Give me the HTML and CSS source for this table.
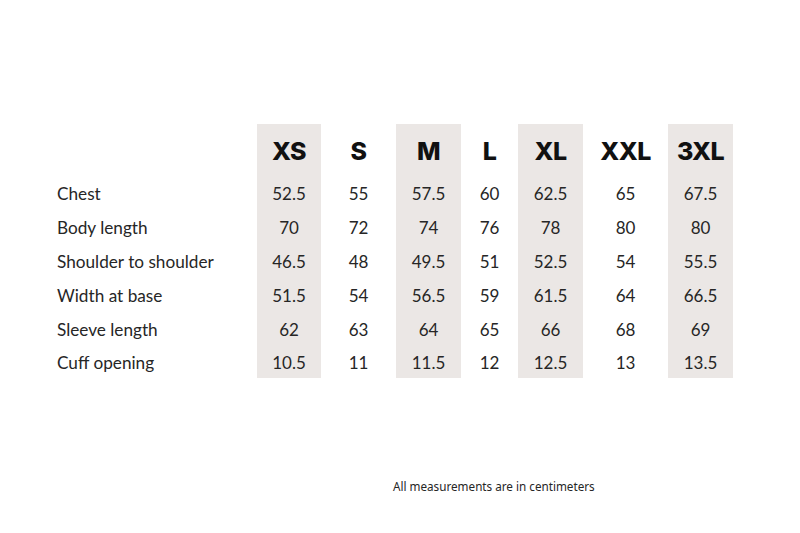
FILE: index.html
```html
<!DOCTYPE html>
<html>
<head>
<meta charset="utf-8">
<link rel="stylesheet" href="styles.css">
</head>
<body>
<div class="page">
  <div class="chart">
    <div class="cell label"></div>
    <div class="cell size shade">XS</div>
    <div class="cell size">S</div>
    <div class="cell size shade">M</div>
    <div class="cell size">L</div>
    <div class="cell size shade">XL</div>
    <div class="cell size">XXL</div>
    <div class="cell size shade">3XL</div>

    <div class="cell label">Chest</div>
    <div class="cell val shade">52.5</div>
    <div class="cell val">55</div>
    <div class="cell val shade">57.5</div>
    <div class="cell val">60</div>
    <div class="cell val shade">62.5</div>
    <div class="cell val">65</div>
    <div class="cell val shade">67.5</div>

    <div class="cell label">Body length</div>
    <div class="cell val shade">70</div>
    <div class="cell val">72</div>
    <div class="cell val shade">74</div>
    <div class="cell val">76</div>
    <div class="cell val shade">78</div>
    <div class="cell val">80</div>
    <div class="cell val shade">80</div>

    <div class="cell label">Shoulder to shoulder</div>
    <div class="cell val shade">46.5</div>
    <div class="cell val">48</div>
    <div class="cell val shade">49.5</div>
    <div class="cell val">51</div>
    <div class="cell val shade">52.5</div>
    <div class="cell val">54</div>
    <div class="cell val shade">55.5</div>

    <div class="cell label">Width at base</div>
    <div class="cell val shade">51.5</div>
    <div class="cell val">54</div>
    <div class="cell val shade">56.5</div>
    <div class="cell val">59</div>
    <div class="cell val shade">61.5</div>
    <div class="cell val">64</div>
    <div class="cell val shade">66.5</div>

    <div class="cell label">Sleeve length</div>
    <div class="cell val shade">62</div>
    <div class="cell val">63</div>
    <div class="cell val shade">64</div>
    <div class="cell val">65</div>
    <div class="cell val shade">66</div>
    <div class="cell val">68</div>
    <div class="cell val shade">69</div>

    <div class="cell label">Cuff opening</div>
    <div class="cell val shade">10.5</div>
    <div class="cell val">11</div>
    <div class="cell val shade">11.5</div>
    <div class="cell val">12</div>
    <div class="cell val shade">12.5</div>
    <div class="cell val">13</div>
    <div class="cell val shade">13.5</div>
  </div>
  <p class="note">All measurements are in centimeters</p>
</div>
</body>
</html>
```

FILE: styles.css
```css
html, body {
  margin: 0;
  padding: 0;
  background: #ffffff;
}

.page {
  width: 800px;
  height: 533px;
  padding-top: 124px;
  padding-left: 57px;
  box-sizing: border-box;
  color: #1e1e1e;
}

.chart {
  display: grid;
  grid-template-columns: 200px 64px 75px 65px 57px 65px 85px 65px;
  grid-template-rows: 52px repeat(5, 34px) 32px;
}

.cell {
  display: flex;
  align-items: center;
}

.chart .cell:nth-last-child(-n+8) {
  padding-bottom: 0;
}

.shade {
  background: #ebe7e5;
}

.size {
  justify-content: center;
  font-family: "Inter", "Liberation Sans", sans-serif;
  font-weight: 800;
  font-size: 25px;
  letter-spacing: -0.6px;
  color: #111;
  padding-top: 2px;
}

.label {
  font-family: "Lato", "Liberation Sans", sans-serif;
  font-size: 17.2px;
  color: #262626;
}

.val {
  justify-content: center;
  font-family: "Lato", "Liberation Sans", sans-serif;
  font-size: 17px;
  color: #262626;
}

.note {
  margin: 100px 0 0 336px;
  font-family: "Noto Sans", "Liberation Sans", sans-serif;
  font-size: 11.7px;
  color: #262626;
}
```
